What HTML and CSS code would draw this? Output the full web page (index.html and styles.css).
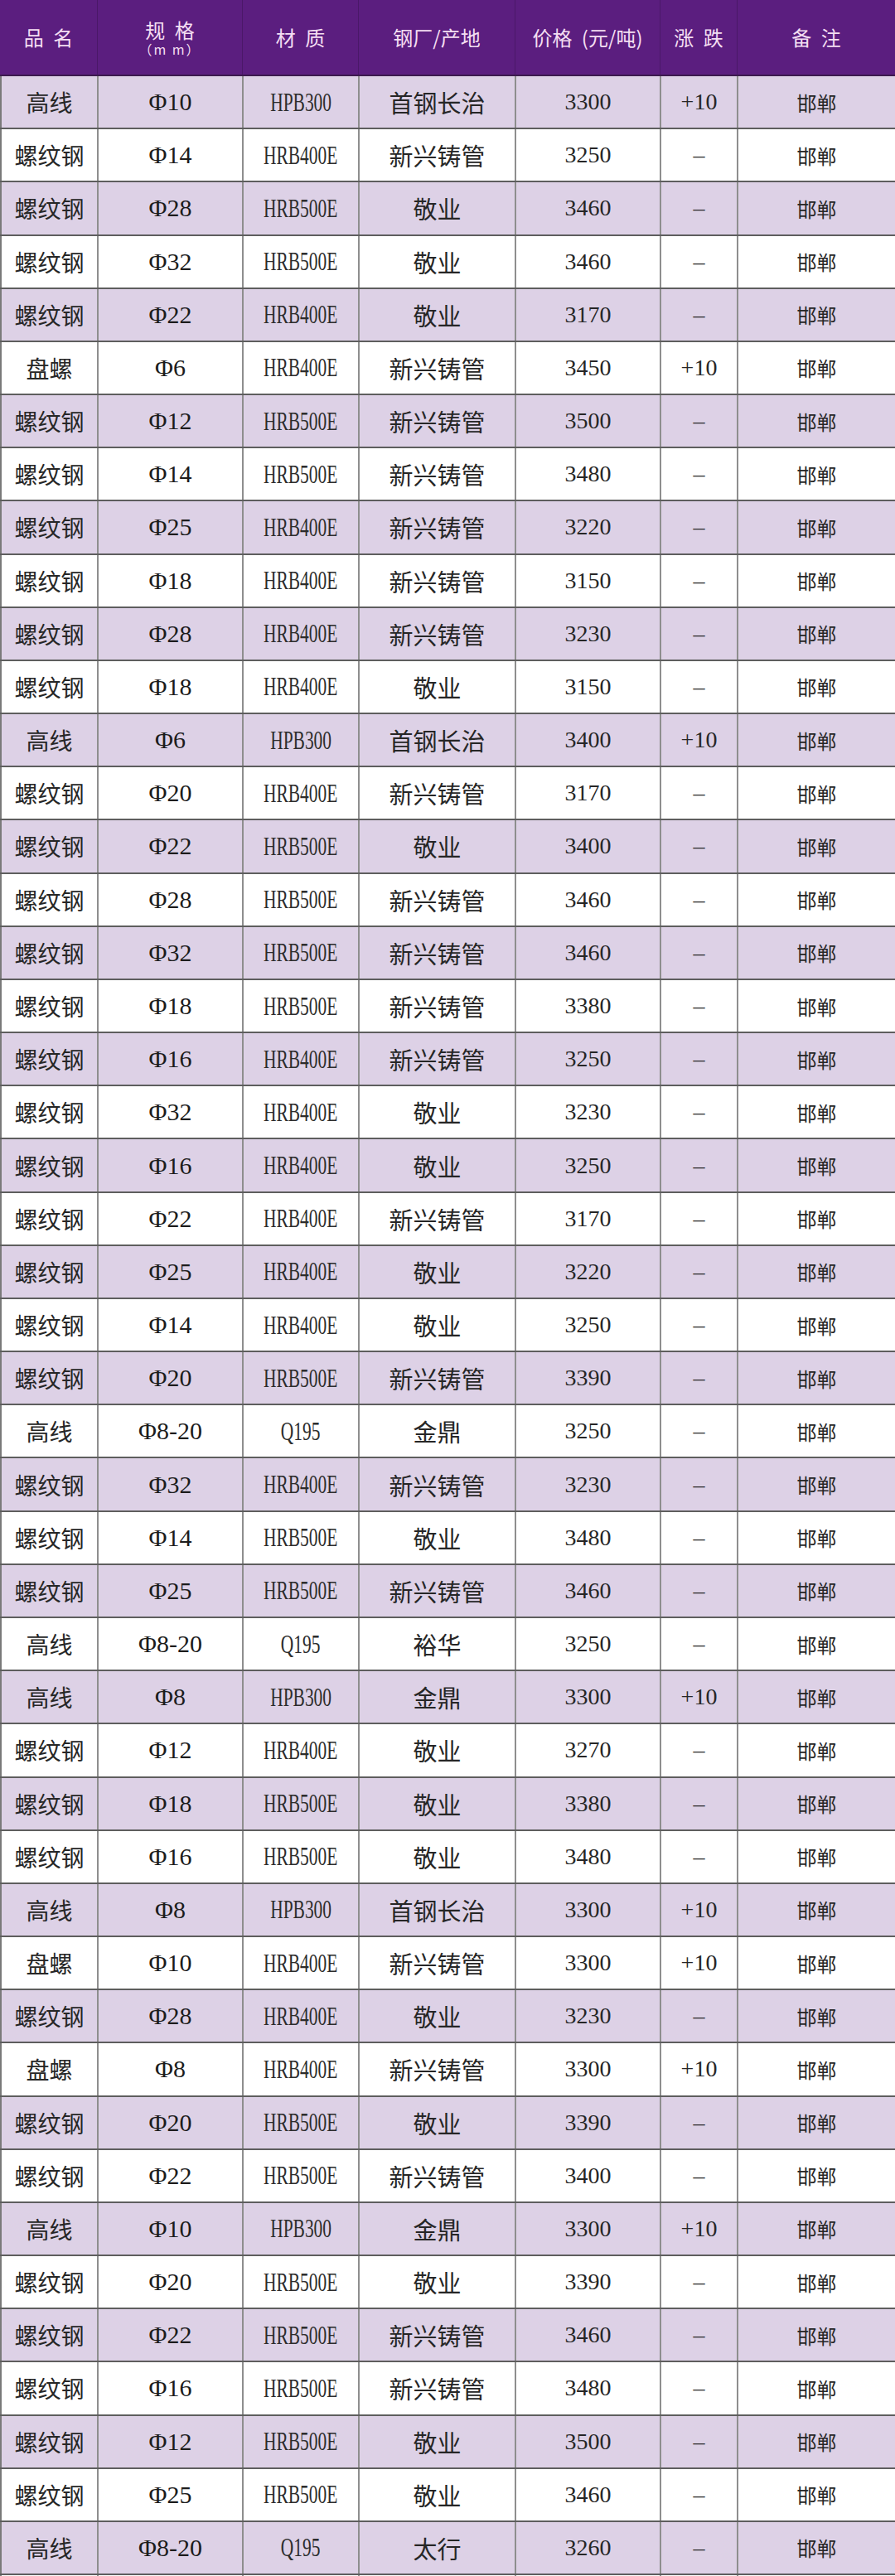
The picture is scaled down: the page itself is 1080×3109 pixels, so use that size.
FILE: index.html
```html
<!DOCTYPE html>
<html lang="zh-CN">
<head>
<meta charset="utf-8">
<title>钢材价格表</title>
<link rel="stylesheet" href="styles.css">
</head>
<body>
<div class="table">
  <div class="row head">
    <div class="c">品 名</div>
    <div class="c two"><span class="top">规 格</span><span class="unit">（m m）</span></div>
    <div class="c">材 质</div>
    <div class="c">钢厂/产地</div>
    <div class="c">价格 (元/吨)</div>
    <div class="c">涨 跌</div>
    <div class="c">备 注</div>
  </div>
  <div class="row alt"><div class="c n">高线</div><div class="c s">Φ10</div><div class="c m"><span>HPB300</span></div><div class="c f">首钢长治</div><div class="c p">3300</div><div class="c p">+10</div><div class="c r">邯郸</div></div>
  <div class="row"><div class="c n">螺纹钢</div><div class="c s">Φ14</div><div class="c m"><span>HRB400E</span></div><div class="c f">新兴铸管</div><div class="c p">3250</div><div class="c p">–</div><div class="c r">邯郸</div></div>
  <div class="row alt"><div class="c n">螺纹钢</div><div class="c s">Φ28</div><div class="c m"><span>HRB500E</span></div><div class="c f">敬业</div><div class="c p">3460</div><div class="c p">–</div><div class="c r">邯郸</div></div>
  <div class="row"><div class="c n">螺纹钢</div><div class="c s">Φ32</div><div class="c m"><span>HRB500E</span></div><div class="c f">敬业</div><div class="c p">3460</div><div class="c p">–</div><div class="c r">邯郸</div></div>
  <div class="row alt"><div class="c n">螺纹钢</div><div class="c s">Φ22</div><div class="c m"><span>HRB400E</span></div><div class="c f">敬业</div><div class="c p">3170</div><div class="c p">–</div><div class="c r">邯郸</div></div>
  <div class="row"><div class="c n">盘螺</div><div class="c s">Φ6</div><div class="c m"><span>HRB400E</span></div><div class="c f">新兴铸管</div><div class="c p">3450</div><div class="c p">+10</div><div class="c r">邯郸</div></div>
  <div class="row alt"><div class="c n">螺纹钢</div><div class="c s">Φ12</div><div class="c m"><span>HRB500E</span></div><div class="c f">新兴铸管</div><div class="c p">3500</div><div class="c p">–</div><div class="c r">邯郸</div></div>
  <div class="row"><div class="c n">螺纹钢</div><div class="c s">Φ14</div><div class="c m"><span>HRB500E</span></div><div class="c f">新兴铸管</div><div class="c p">3480</div><div class="c p">–</div><div class="c r">邯郸</div></div>
  <div class="row alt"><div class="c n">螺纹钢</div><div class="c s">Φ25</div><div class="c m"><span>HRB400E</span></div><div class="c f">新兴铸管</div><div class="c p">3220</div><div class="c p">–</div><div class="c r">邯郸</div></div>
  <div class="row"><div class="c n">螺纹钢</div><div class="c s">Φ18</div><div class="c m"><span>HRB400E</span></div><div class="c f">新兴铸管</div><div class="c p">3150</div><div class="c p">–</div><div class="c r">邯郸</div></div>
  <div class="row alt"><div class="c n">螺纹钢</div><div class="c s">Φ28</div><div class="c m"><span>HRB400E</span></div><div class="c f">新兴铸管</div><div class="c p">3230</div><div class="c p">–</div><div class="c r">邯郸</div></div>
  <div class="row"><div class="c n">螺纹钢</div><div class="c s">Φ18</div><div class="c m"><span>HRB400E</span></div><div class="c f">敬业</div><div class="c p">3150</div><div class="c p">–</div><div class="c r">邯郸</div></div>
  <div class="row alt"><div class="c n">高线</div><div class="c s">Φ6</div><div class="c m"><span>HPB300</span></div><div class="c f">首钢长治</div><div class="c p">3400</div><div class="c p">+10</div><div class="c r">邯郸</div></div>
  <div class="row"><div class="c n">螺纹钢</div><div class="c s">Φ20</div><div class="c m"><span>HRB400E</span></div><div class="c f">新兴铸管</div><div class="c p">3170</div><div class="c p">–</div><div class="c r">邯郸</div></div>
  <div class="row alt"><div class="c n">螺纹钢</div><div class="c s">Φ22</div><div class="c m"><span>HRB500E</span></div><div class="c f">敬业</div><div class="c p">3400</div><div class="c p">–</div><div class="c r">邯郸</div></div>
  <div class="row"><div class="c n">螺纹钢</div><div class="c s">Φ28</div><div class="c m"><span>HRB500E</span></div><div class="c f">新兴铸管</div><div class="c p">3460</div><div class="c p">–</div><div class="c r">邯郸</div></div>
  <div class="row alt"><div class="c n">螺纹钢</div><div class="c s">Φ32</div><div class="c m"><span>HRB500E</span></div><div class="c f">新兴铸管</div><div class="c p">3460</div><div class="c p">–</div><div class="c r">邯郸</div></div>
  <div class="row"><div class="c n">螺纹钢</div><div class="c s">Φ18</div><div class="c m"><span>HRB500E</span></div><div class="c f">新兴铸管</div><div class="c p">3380</div><div class="c p">–</div><div class="c r">邯郸</div></div>
  <div class="row alt"><div class="c n">螺纹钢</div><div class="c s">Φ16</div><div class="c m"><span>HRB400E</span></div><div class="c f">新兴铸管</div><div class="c p">3250</div><div class="c p">–</div><div class="c r">邯郸</div></div>
  <div class="row"><div class="c n">螺纹钢</div><div class="c s">Φ32</div><div class="c m"><span>HRB400E</span></div><div class="c f">敬业</div><div class="c p">3230</div><div class="c p">–</div><div class="c r">邯郸</div></div>
  <div class="row alt"><div class="c n">螺纹钢</div><div class="c s">Φ16</div><div class="c m"><span>HRB400E</span></div><div class="c f">敬业</div><div class="c p">3250</div><div class="c p">–</div><div class="c r">邯郸</div></div>
  <div class="row"><div class="c n">螺纹钢</div><div class="c s">Φ22</div><div class="c m"><span>HRB400E</span></div><div class="c f">新兴铸管</div><div class="c p">3170</div><div class="c p">–</div><div class="c r">邯郸</div></div>
  <div class="row alt"><div class="c n">螺纹钢</div><div class="c s">Φ25</div><div class="c m"><span>HRB400E</span></div><div class="c f">敬业</div><div class="c p">3220</div><div class="c p">–</div><div class="c r">邯郸</div></div>
  <div class="row"><div class="c n">螺纹钢</div><div class="c s">Φ14</div><div class="c m"><span>HRB400E</span></div><div class="c f">敬业</div><div class="c p">3250</div><div class="c p">–</div><div class="c r">邯郸</div></div>
  <div class="row alt"><div class="c n">螺纹钢</div><div class="c s">Φ20</div><div class="c m"><span>HRB500E</span></div><div class="c f">新兴铸管</div><div class="c p">3390</div><div class="c p">–</div><div class="c r">邯郸</div></div>
  <div class="row"><div class="c n">高线</div><div class="c s">Φ8-20</div><div class="c m"><span>Q195</span></div><div class="c f">金鼎</div><div class="c p">3250</div><div class="c p">–</div><div class="c r">邯郸</div></div>
  <div class="row alt"><div class="c n">螺纹钢</div><div class="c s">Φ32</div><div class="c m"><span>HRB400E</span></div><div class="c f">新兴铸管</div><div class="c p">3230</div><div class="c p">–</div><div class="c r">邯郸</div></div>
  <div class="row"><div class="c n">螺纹钢</div><div class="c s">Φ14</div><div class="c m"><span>HRB500E</span></div><div class="c f">敬业</div><div class="c p">3480</div><div class="c p">–</div><div class="c r">邯郸</div></div>
  <div class="row alt"><div class="c n">螺纹钢</div><div class="c s">Φ25</div><div class="c m"><span>HRB500E</span></div><div class="c f">新兴铸管</div><div class="c p">3460</div><div class="c p">–</div><div class="c r">邯郸</div></div>
  <div class="row"><div class="c n">高线</div><div class="c s">Φ8-20</div><div class="c m"><span>Q195</span></div><div class="c f">裕华</div><div class="c p">3250</div><div class="c p">–</div><div class="c r">邯郸</div></div>
  <div class="row alt"><div class="c n">高线</div><div class="c s">Φ8</div><div class="c m"><span>HPB300</span></div><div class="c f">金鼎</div><div class="c p">3300</div><div class="c p">+10</div><div class="c r">邯郸</div></div>
  <div class="row"><div class="c n">螺纹钢</div><div class="c s">Φ12</div><div class="c m"><span>HRB400E</span></div><div class="c f">敬业</div><div class="c p">3270</div><div class="c p">–</div><div class="c r">邯郸</div></div>
  <div class="row alt"><div class="c n">螺纹钢</div><div class="c s">Φ18</div><div class="c m"><span>HRB500E</span></div><div class="c f">敬业</div><div class="c p">3380</div><div class="c p">–</div><div class="c r">邯郸</div></div>
  <div class="row"><div class="c n">螺纹钢</div><div class="c s">Φ16</div><div class="c m"><span>HRB500E</span></div><div class="c f">敬业</div><div class="c p">3480</div><div class="c p">–</div><div class="c r">邯郸</div></div>
  <div class="row alt"><div class="c n">高线</div><div class="c s">Φ8</div><div class="c m"><span>HPB300</span></div><div class="c f">首钢长治</div><div class="c p">3300</div><div class="c p">+10</div><div class="c r">邯郸</div></div>
  <div class="row"><div class="c n">盘螺</div><div class="c s">Φ10</div><div class="c m"><span>HRB400E</span></div><div class="c f">新兴铸管</div><div class="c p">3300</div><div class="c p">+10</div><div class="c r">邯郸</div></div>
  <div class="row alt"><div class="c n">螺纹钢</div><div class="c s">Φ28</div><div class="c m"><span>HRB400E</span></div><div class="c f">敬业</div><div class="c p">3230</div><div class="c p">–</div><div class="c r">邯郸</div></div>
  <div class="row"><div class="c n">盘螺</div><div class="c s">Φ8</div><div class="c m"><span>HRB400E</span></div><div class="c f">新兴铸管</div><div class="c p">3300</div><div class="c p">+10</div><div class="c r">邯郸</div></div>
  <div class="row alt"><div class="c n">螺纹钢</div><div class="c s">Φ20</div><div class="c m"><span>HRB500E</span></div><div class="c f">敬业</div><div class="c p">3390</div><div class="c p">–</div><div class="c r">邯郸</div></div>
  <div class="row"><div class="c n">螺纹钢</div><div class="c s">Φ22</div><div class="c m"><span>HRB500E</span></div><div class="c f">新兴铸管</div><div class="c p">3400</div><div class="c p">–</div><div class="c r">邯郸</div></div>
  <div class="row alt"><div class="c n">高线</div><div class="c s">Φ10</div><div class="c m"><span>HPB300</span></div><div class="c f">金鼎</div><div class="c p">3300</div><div class="c p">+10</div><div class="c r">邯郸</div></div>
  <div class="row"><div class="c n">螺纹钢</div><div class="c s">Φ20</div><div class="c m"><span>HRB500E</span></div><div class="c f">敬业</div><div class="c p">3390</div><div class="c p">–</div><div class="c r">邯郸</div></div>
  <div class="row alt"><div class="c n">螺纹钢</div><div class="c s">Φ22</div><div class="c m"><span>HRB500E</span></div><div class="c f">新兴铸管</div><div class="c p">3460</div><div class="c p">–</div><div class="c r">邯郸</div></div>
  <div class="row"><div class="c n">螺纹钢</div><div class="c s">Φ16</div><div class="c m"><span>HRB500E</span></div><div class="c f">新兴铸管</div><div class="c p">3480</div><div class="c p">–</div><div class="c r">邯郸</div></div>
  <div class="row alt"><div class="c n">螺纹钢</div><div class="c s">Φ12</div><div class="c m"><span>HRB500E</span></div><div class="c f">敬业</div><div class="c p">3500</div><div class="c p">–</div><div class="c r">邯郸</div></div>
  <div class="row"><div class="c n">螺纹钢</div><div class="c s">Φ25</div><div class="c m"><span>HRB500E</span></div><div class="c f">敬业</div><div class="c p">3460</div><div class="c p">–</div><div class="c r">邯郸</div></div>
  <div class="row alt"><div class="c n">高线</div><div class="c s">Φ8-20</div><div class="c m"><span>Q195</span></div><div class="c f">太行</div><div class="c p">3260</div><div class="c p">–</div><div class="c r">邯郸</div></div>
  <div class="row tail"><div class="c"></div><div class="c"></div><div class="c"></div><div class="c"></div><div class="c"></div><div class="c"></div><div class="c"></div></div>
</div>
</body>
</html>
```
FILE: styles.css
```css
html, body {
  margin: 0;
  padding: 0;
  background: #ffffff;
}

.table {
  width: 1080px;
  overflow: hidden;
  height: 3109px;
}

.row {
  display: grid;
  grid-template-columns: 117px 175px 140px 189px 175px 93px 191px;
  height: 64.18px;
  box-sizing: border-box;
  border-bottom: 2px solid #5e5e5e;
  background: #ffffff;
  font-family: "Liberation Serif", "Noto Sans CJK SC", serif;
  color: #262626;
}

.row.alt {
  background: #ddd1e6;
}

.row.head {
  height: 92px;
  background: #5b1e7f;
  border-bottom: 2px solid #3c1a4e;
  font-family: "Noto Sans CJK SC", "Noto Sans", sans-serif;
  color: #f4def2;
  font-size: 24px;
  word-spacing: 6px;
}

.row.tail {
  border-bottom: none;
  height: 20px;
}

.c {
  display: flex;
  align-items: center;
  justify-content: center;
  border-left: 2px solid #8e8e8e;
  box-sizing: border-box;
  white-space: nowrap;
}

.c:first-child {
  border-left: 2px solid #7a7a7a;
}

.head .c {
  border-left: 1px solid #4a1868;
  line-height: 1.2;
}

.head .c:first-child {
  border-left: none;
}

.c.two {
  flex-direction: column;
  padding-top: 2px;
}

.c.two .top {
  display: block;
  line-height: 26px;
  height: 26px;
}

.c.two .unit {
  display: block;
  font-size: 16px;
  line-height: 20px;
  height: 20px;
  word-spacing: 0;
  letter-spacing: 2px;
}

.c.n {
  font-size: 28px;
}

.c.f {
  font-size: 29px;
}

.c.s {
  font-size: 30px;
  color: #1c1c1c;
}

.c.m span {
  display: inline-block;
  font-size: 32px;
  transform: scaleX(0.67);
  color: #2c2c2c;
}

.c.p {
  font-size: 28px;
}

.c.r {
  font-size: 24px;
}
```
